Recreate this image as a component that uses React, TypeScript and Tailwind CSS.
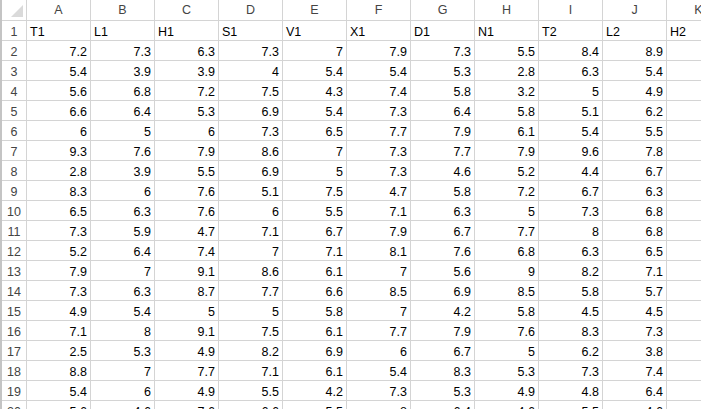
import React from 'react';

const cols = ['A', 'B', 'C', 'D', 'E', 'F', 'G', 'H', 'I', 'J', 'K'];
const titles = ['T1', 'L1', 'H1', 'S1', 'V1', 'X1', 'D1', 'N1', 'T2', 'L2', 'H2'];

const data: (number | string)[][] = [
  [7.2, 7.3, 6.3, 7.3, 7, 7.9, 7.3, 5.5, 8.4, 8.9],
  [5.4, 3.9, 3.9, 4, 5.4, 5.4, 5.3, 2.8, 6.3, 5.4],
  [5.6, 6.8, 7.2, 7.5, 4.3, 7.4, 5.8, 3.2, 5, 4.9],
  [6.6, 6.4, 5.3, 6.9, 5.4, 7.3, 6.4, 5.8, 5.1, 6.2],
  [6, 5, 6, 7.3, 6.5, 7.7, 7.9, 6.1, 5.4, 5.5],
  [9.3, 7.6, 7.9, 8.6, 7, 7.3, 7.7, 7.9, 9.6, 7.8],
  [2.8, 3.9, 5.5, 6.9, 5, 7.3, 4.6, 5.2, 4.4, 6.7],
  [8.3, 6, 7.6, 5.1, 7.5, 4.7, 5.8, 7.2, 6.7, 6.3],
  [6.5, 6.3, 7.6, 6, 5.5, 7.1, 6.3, 5, 7.3, 6.8],
  [7.3, 5.9, 4.7, 7.1, 6.7, 7.9, 6.7, 7.7, 8, 6.8],
  [5.2, 6.4, 7.4, 7, 7.1, 8.1, 7.6, 6.8, 6.3, 6.5],
  [7.9, 7, 9.1, 8.6, 6.1, 7, 5.6, 9, 8.2, 7.1],
  [7.3, 6.3, 8.7, 7.7, 6.6, 8.5, 6.9, 8.5, 5.8, 5.7],
  [4.9, 5.4, 5, 5, 5.8, 7, 4.2, 5.8, 4.5, 4.5],
  [7.1, 8, 9.1, 7.5, 6.1, 7.7, 7.9, 7.6, 8.3, 7.3],
  [2.5, 5.3, 4.9, 8.2, 6.9, 6, 6.7, 5, 6.2, 3.8],
  [8.8, 7, 7.7, 7.1, 6.1, 5.4, 8.3, 5.3, 7.3, 7.4],
  [5.4, 6, 4.9, 5.5, 4.2, 7.3, 5.3, 4.9, 4.8, 6.4],
  [5.6, 4.6, 7.6, 6.6, 5.5, 8, 6.4, 4.6, 5.5, 4.6],
];

const rowHead =
  'flex items-end justify-center pb-[2px] border-r border-b border-[#d4d4d4] text-[#444444]';
const cell = 'flex items-end border-r border-b border-[#d4d4d4] pb-[2px] px-[3px]';

export default function App() {
  return (
    <div
      className="w-[701px] h-[409px] overflow-hidden bg-white border-l-2 border-[#c4c4c4] text-[12.5px] leading-none text-black"
      style={{ fontFamily: '"Liberation Sans", Arial, sans-serif' }}
    >
      <div className="grid grid-cols-[25px_repeat(11,64px)] auto-rows-[20px] grid-rows-[21px]">
        {/* corner with select-all triangle */}
        <div className="flex items-end justify-end pr-[3px] pb-[3px] border-r border-b border-[#d4d4d4]">
          <svg width="12" height="12" viewBox="0 0 12 12">
            <path d="M12 0 L12 12 L0 12 Z" fill="#dadada" />
          </svg>
        </div>
        {cols.map((c) => (
          <div
            key={c}
            className="flex items-center justify-center border-r border-b border-[#d4d4d4] text-[#444444] pt-[1px]"
          >
            {c}
          </div>
        ))}

        {/* row 1: titles */}
        <div className={rowHead}>1</div>
        {titles.map((t) => (
          <div key={t} className={cell}>
            {t}
          </div>
        ))}

        {data.map((row, i) => (
          <React.Fragment key={i}>
            <div className={rowHead}>{i + 2}</div>
            {row.map((v, j) => (
              <div key={j} className={`${cell} justify-end`}>
                {v}
              </div>
            ))}
            <div className={cell} />
          </React.Fragment>
        ))}
      </div>
    </div>
  );
}
